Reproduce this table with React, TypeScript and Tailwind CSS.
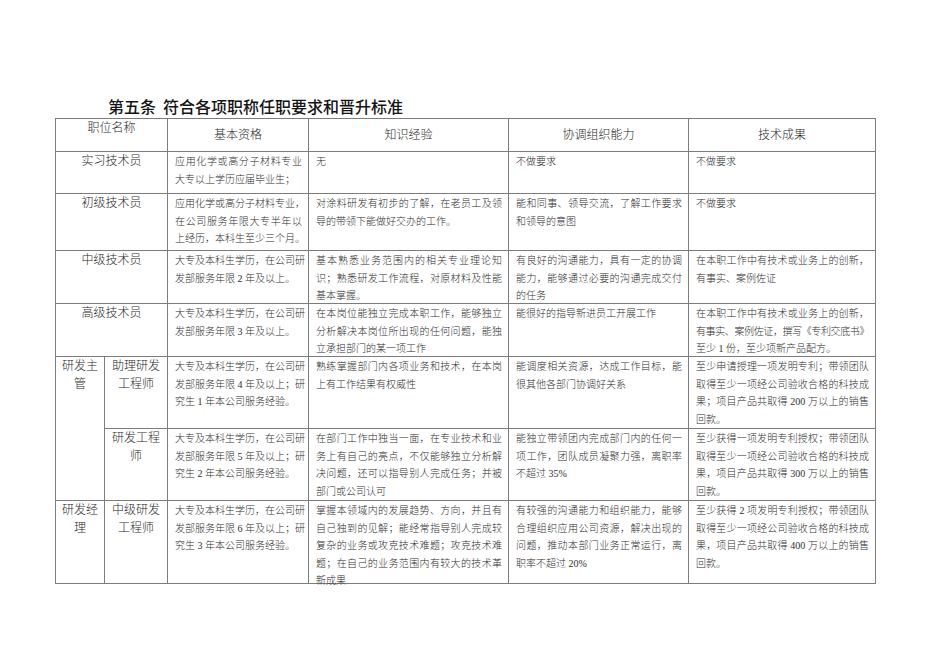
import React from "react";

type Line = string | { t: string; cls?: string };

function Body({ lines, justify = true }: { lines: Line[]; justify?: boolean }) {
  return (
    <div className="pl-[7px] pr-[6px] pt-[1px] text-[10px] leading-[17.5px] font-light text-[#2e2e2e]">
      {lines.map((ln, i) => {
        const t = typeof ln === "string" ? ln : ln.t;
        const extra = typeof ln === "string" ? "" : ln.cls ?? "";
        const last = i === lines.length - 1;
        return (
          <div
            key={i}
            className={
              (justify && !last
                ? "whitespace-nowrap text-justify [text-align-last:justify] "
                : "whitespace-nowrap ") + extra
            }
          >
            {t}
          </div>
        );
      })}
    </div>
  );
}

function Name({ lines }: { lines: string[] }) {
  return (
    <div className="pt-[1px] text-center text-[12px] leading-[17.5px] font-light text-[#1f1f1f]">
      {lines.map((l, i) => (
        <div key={i} className="whitespace-nowrap">{l}</div>
      ))}
    </div>
  );
}

const cell = "border-r border-b border-[#7c7c7c] overflow-visible";
const head = "border-r border-b border-[#7c7c7c] flex items-center justify-center text-[12px] font-light text-[#1f1f1f]";

export default function App() {
  return (
    <div className="min-h-[672px] w-[950px] bg-white font-['Liberation_Serif','Noto_Sans_CJK_SC',serif]">
      <div className="pl-[55px] pt-[96px]">
        <div className="ml-[53px] h-[22px] text-[16px] leading-[20px] font-medium text-[#141414] font-['Noto_Sans_CJK_SC',sans-serif]">
          <span>第五条</span>
          <span className="ml-[7px]">符合各项职称任职要求和晋升标准</span>
        </div>
        <div className="grid w-fit grid-cols-[49px_63px_141px_200px_180px_187px] grid-rows-[33px_42px_57px_53px_53px_72px_72px_83px] border-l border-t border-[#7c7c7c]">
          {/* header */}
          <div className={`${cell} col-span-2 pt-[1px] text-center text-[12px] leading-[17.5px] font-light text-[#1f1f1f]`}>职位名称</div>
          <div className={head}>基本资格</div>
          <div className={head}>知识经验</div>
          <div className={head}>协调组织能力</div>
          <div className={head}>技术成果</div>

          {/* 实习 */}
          <div className={`${cell} col-span-2`}><Name lines={["实习技术员"]} /></div>
          <div className={cell}><Body lines={["应用化学或高分子材料专业", "大专以上学历应届毕业生；"]} /></div>
          <div className={cell}><Body lines={["无"]} /></div>
          <div className={cell}><Body lines={["不做要求"]} /></div>
          <div className={cell}><Body lines={["不做要求"]} /></div>

          {/* 初级 */}
          <div className={`${cell} col-span-2`}><Name lines={["初级技术员"]} /></div>
          <div className={cell}><Body lines={["应用化学或高分子材料专业，", "在公司服务年限大专半年以", "上经历，本科生至少三个月。"]} /></div>
          <div className={cell}><Body lines={["对涂料研发有初步的了解，在老员工及领", "导的带领下能做好交办的工作。"]} /></div>
          <div className={cell}><Body lines={["能和同事、领导交流，了解工作要求", "和领导的意图"]} /></div>
          <div className={cell}><Body lines={["不做要求"]} /></div>

          {/* 中级 */}
          <div className={`${cell} col-span-2`}><Name lines={["中级技术员"]} /></div>
          <div className={cell}><Body lines={["大专及本科生学历，在公司研", "发部服务年限 2 年及以上。"]} /></div>
          <div className={cell}><Body lines={["基本熟悉业务范围内的相关专业理论知", "识；熟悉研发工作流程，对原材料及性能", "基本掌握。"]} /></div>
          <div className={cell}><Body lines={["有良好的沟通能力，具有一定的协调", "能力，能够通过必要的沟通完成交付", "的任务"]} /></div>
          <div className={cell}><Body lines={["在本职工作中有技术或业务上的创新，", "有事实、案例佐证"]} /></div>

          {/* 高级 */}
          <div className={`${cell} col-span-2`}><Name lines={["高级技术员"]} /></div>
          <div className={cell}><Body lines={["大专及本科生学历，在公司研", "发部服务年限 3 年及以上。"]} /></div>
          <div className={cell}><Body lines={["在本岗位能独立完成本职工作，能够独立", "分析解决本岗位所出现的任何问题，能独", "立承担部门的某一项工作"]} /></div>
          <div className={cell}><Body lines={["能很好的指导新进员工开展工作"]} /></div>
          <div className={cell}>
            <Body
              lines={[
                "在本职工作中有技术或业务上的创新，",
                { t: "有事实、案例佐证，撰写《专利交底书》", cls: "tracking-[-0.4px]" },
                "至少 1 份，至少项新产品配方。",
              ]}
            />
          </div>

          {/* 研发主管 */}
          <div className={`${cell} row-span-2`}><Name lines={["研发主", "管"]} /></div>
          <div className={cell}><Name lines={["助理研发", "工程师"]} /></div>
          <div className={cell}><Body lines={["大专及本科生学历，在公司研", "发部服务年限 4 年及以上；研", "究生 1 年本公司服务经验。"]} /></div>
          <div className={cell}><Body lines={["熟练掌握部门内各项业务和技术，在本岗", "上有工作结果有权威性"]} /></div>
          <div className={cell}><Body lines={["能调度相关资源，达成工作目标，能", "很其他各部门协调好关系"]} /></div>
          <div className={cell}><Body lines={["至少申请授理一项发明专利；带领团队", "取得至少一项经公司验收合格的科技成", "果；项目产品共取得 200 万以上的销售", "回款。"]} /></div>

          <div className={cell}><Name lines={["研发工程", "师"]} /></div>
          <div className={cell}><Body lines={["大专及本科生学历，在公司研", "发部服务年限 5 年及以上；研", "究生 2 年本公司服务经验。"]} /></div>
          <div className={cell}><Body lines={["在部门工作中独当一面，在专业技术和业", "务上有自己的亮点，不仅能够独立分析解", "决问题，还可以指导别人完成任务；并被", "部门或公司认可"]} /></div>
          <div className={cell}><Body lines={["能独立带领团内完成部门内的任何一", "项工作，团队成员凝聚力强，离职率", "不超过 35%"]} /></div>
          <div className={cell}><Body lines={["至少获得一项发明专利授权；带领团队", "取得至少一项经公司验收合格的科技成", "果，项目产品共取得 300 万以上的销售", "回款。"]} /></div>

          {/* 研发经理 */}
          <div className={cell}><Name lines={["研发经", "理"]} /></div>
          <div className={cell}><Name lines={["中级研发", "工程师"]} /></div>
          <div className={cell}><Body lines={["大专及本科生学历，在公司研", "发部服务年限 6 年及以上；研", "究生 3 年本公司服务经验。"]} /></div>
          <div className={cell}><Body lines={["掌握本领域内的发展趋势、方向，并且有", "自己独到的见解；能经常指导别人完成较", "复杂的业务或攻克技术难题；攻克技术难", "题；在自己的业务范围内有较大的技术革", "新成果"]} /></div>
          <div className={cell}><Body lines={["有较强的沟通能力和组织能力，能够", "合理组织应用公司资源，解决出现的", "问题，推动本部门业务正常运行，离", "职率不超过 20%"]} /></div>
          <div className={cell}><Body lines={["至少获得 2 项发明专利授权；带领团队", "取得至少一项经公司验收合格的科技成", "果，项目产品共取得 400 万以上的销售", "回款。"]} /></div>
        </div>
      </div>
    </div>
  );
}
